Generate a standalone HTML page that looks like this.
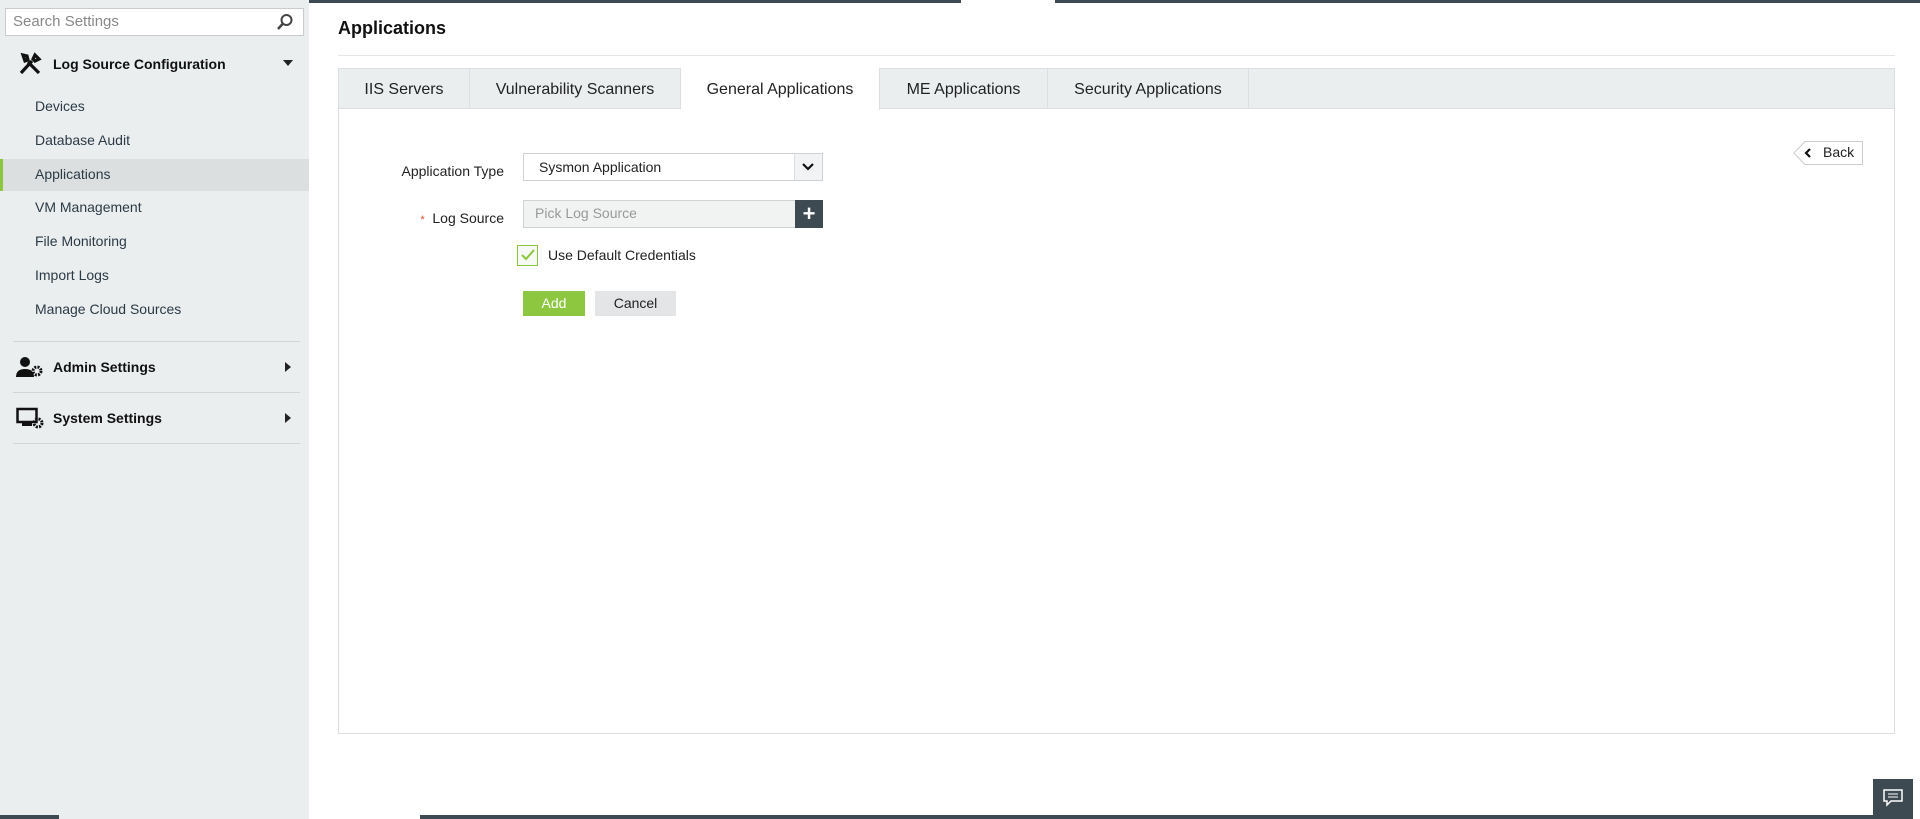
<!DOCTYPE html>
<html><head><style>
*{box-sizing:border-box;margin:0;padding:0}
body{width:1920px;height:819px;overflow:hidden;background:#fff;font-family:"Liberation Sans",sans-serif;position:relative;color:#222}
.abs{position:absolute}
#side{left:0;top:0;width:309px;height:819px;background:#ebeeef}
.item{position:absolute;left:35px;font-size:14px;color:#2b3a45}
.sep{position:absolute;left:13px;width:287px;height:1px;background:#d3d6d8}
.hdr{position:absolute;left:53px;font-size:14px;font-weight:bold;color:#111}
.tab{position:absolute;top:68px;height:41px;line-height:43px;text-align:center;font-size:16px;color:#222;border-right:1px solid #dcdfe1}
</style></head><body>
<div class="abs" style="left:0;top:0;width:961px;height:3px;background:#3d4a52"></div>
<div class="abs" style="left:1055px;top:0;width:865px;height:3px;background:#3d4a52"></div>
<div id="side" class="abs">
 <div class="abs" style="left:5px;top:8px;width:299px;height:28px;background:#fff;border:1px solid #c8ccce;font-size:15px;color:#888;padding:4px 7px">Search Settings</div>
 <svg class="abs" style="left:276px;top:13px" width="18" height="18" viewBox="0 0 18 18"><circle cx="10.5" cy="7" r="5" fill="none" stroke="#444" stroke-width="2"/><line x1="7" y1="10.5" x2="2" y2="16" stroke="#444" stroke-width="2.5"/></svg>
 <svg class="abs" style="left:18px;top:52px" width="24" height="24" viewBox="0 0 24 24"><path d="M3 21L14 9M5 3l4 1 1 4-3 1zM21 21L10 10M17 3l4 4-4 2-2-2z" stroke="#111" stroke-width="3.2" fill="none"/></svg>
 <div class="hdr" style="top:56px">Log Source Configuration</div>
 <div class="abs" style="left:283px;top:60px;border:5px solid transparent;border-top:6px solid #222"></div>
 <div class="item" style="top:98px">Devices</div>
 <div class="item" style="top:132px">Database Audit</div>
 <div class="abs" style="left:0;top:159px;width:309px;height:32px;background:#dcdfe0"></div>
 <div class="abs" style="left:0;top:159px;width:3px;height:32px;background:#8dc63f"></div>
 <div class="item" style="top:166px">Applications</div>
 <div class="item" style="top:199px">VM Management</div>
 <div class="item" style="top:233px">File Monitoring</div>
 <div class="item" style="top:267px">Import Logs</div>
 <div class="item" style="top:301px">Manage Cloud Sources</div>
 <div class="sep" style="top:341px"></div>
 <svg class="abs" style="left:16px;top:356px" width="28" height="22" viewBox="0 0 28 22"><circle cx="9" cy="6" r="5" fill="#111"/><path d="M0 21q0-8 9-8t9 8z" fill="#111"/><circle cx="21" cy="15" r="4" fill="none" stroke="#111" stroke-width="3" stroke-dasharray="2 1.2"/></svg>
 <div class="hdr" style="top:359px">Admin Settings</div>
 <div class="abs" style="left:285px;top:362px;border:5px solid transparent;border-left:6px solid #222"></div>
 <div class="sep" style="top:392px"></div>
 <svg class="abs" style="left:16px;top:407px" width="28" height="22" viewBox="0 0 28 22"><rect x="1.5" y="2" width="19" height="13" fill="none" stroke="#111" stroke-width="2.5"/><rect x="6" y="16" width="10" height="3" fill="#111"/><circle cx="22" cy="16" r="4" fill="none" stroke="#111" stroke-width="3" stroke-dasharray="2 1.2"/></svg>
 <div class="hdr" style="top:410px">System Settings</div>
 <div class="abs" style="left:285px;top:413px;border:5px solid transparent;border-left:6px solid #222"></div>
 <div class="sep" style="top:443px"></div>
</div>
<div class="abs" style="left:338px;top:18px;font-size:18px;font-weight:bold;color:#111">Applications</div>
<div class="abs" style="left:338px;top:55px;width:1557px;height:1px;background:#e3e5e6"></div>
<div class="abs" style="left:338px;top:68px;width:1557px;height:666px;border:1px solid #dcdfe1"></div>
<div class="abs" style="left:339px;top:69px;width:1555px;height:40px;background:#ebeeef;border-bottom:1px solid #dcdfe1"></div>
<div class="tab" style="left:339px;width:131px">IIS Servers</div>
<div class="tab" style="left:470px;width:211px">Vulnerability Scanners</div>
<div class="tab" style="left:681px;width:199px;background:#fff;height:42px">General Applications</div>
<div class="tab" style="left:880px;width:168px">ME Applications</div>
<div class="tab" style="left:1048px;width:201px">Security Applications</div>
<div class="abs" style="left:400px;top:163px;width:104px;text-align:right;font-size:14px">Application Type</div>
<div class="abs" style="left:523px;top:153px;width:300px;height:28px;border:1px solid #cfd2d4;font-size:14px;padding:5px 15px">Sysmon Application</div>
<div class="abs" style="left:794px;top:154px;width:28px;height:26px;background:#f2f3f4;border-left:1px solid #dcdfe1"></div>
<svg class="abs" style="left:801px;top:161px" width="14" height="12" viewBox="0 0 14 12"><path d="M2 3l5 5 5-5" stroke="#111" stroke-width="2.2" fill="none"/></svg>
<div class="abs" style="left:400px;top:210px;width:104px;text-align:right;font-size:14px"><span style="color:#e0502a;font-size:11px">*</span>&nbsp; Log Source</div>
<div class="abs" style="left:523px;top:200px;width:273px;height:28px;border:1px solid #cfd2d4;background:#f1f2f2;font-size:14px;color:#999;padding:4px 11px">Pick Log Source</div>
<div class="abs" style="left:795px;top:200px;width:28px;height:28px;background:#3d4a52;color:#fff;font-size:22px;font-weight:bold;text-align:center;line-height:28px">+</div>
<div class="abs" style="left:517px;top:245px;width:21px;height:21px;border:1px solid #8dc63f;background:#f7f9f5"></div>
<svg class="abs" style="left:519px;top:248px" width="17" height="15" viewBox="0 0 17 15"><path d="M3 7l4 4 8-9" stroke="#8dc63f" stroke-width="2" fill="none"/></svg>
<div class="abs" style="left:548px;top:247px;font-size:14px">Use Default Credentials</div>
<div class="abs" style="left:523px;top:291px;width:62px;height:25px;background:#8dc63f;color:#fff;font-size:14px;text-align:center;line-height:25px">Add</div>
<div class="abs" style="left:595px;top:291px;width:81px;height:25px;background:#e4e5e6;color:#222;font-size:14px;text-align:center;line-height:25px">Cancel</div>
<svg class="abs" style="left:1793px;top:141px" width="70" height="24" viewBox="0 0 70 24"><path d="M69.5 .5H12L.8 12 12 23.5h57.5z" fill="#fff" stroke="#ccc"/><path d="M17 8l-4 4 4 4" stroke="#111" stroke-width="2.2" fill="none"/></svg>
<div class="abs" style="left:1823px;top:144px;font-size:14px">Back</div>
<div class="abs" style="left:1873px;top:779px;width:40px;height:40px;background:#3d4a52"></div>
<svg class="abs" style="left:1883px;top:789px" width="20" height="18" viewBox="0 0 20 18"><path d="M1 1h18v11H8l-4 4v-4H1z" fill="none" stroke="#fff" stroke-width="1.5"/><path d="M5 5h10M5 8h10" stroke="#fff"/></svg>
<div class="abs" style="left:0;top:815px;width:59px;height:4px;background:#3d4a52"></div>
<div class="abs" style="left:420px;top:815px;width:1453px;height:4px;background:#3d4a52"></div>
</body></html>
